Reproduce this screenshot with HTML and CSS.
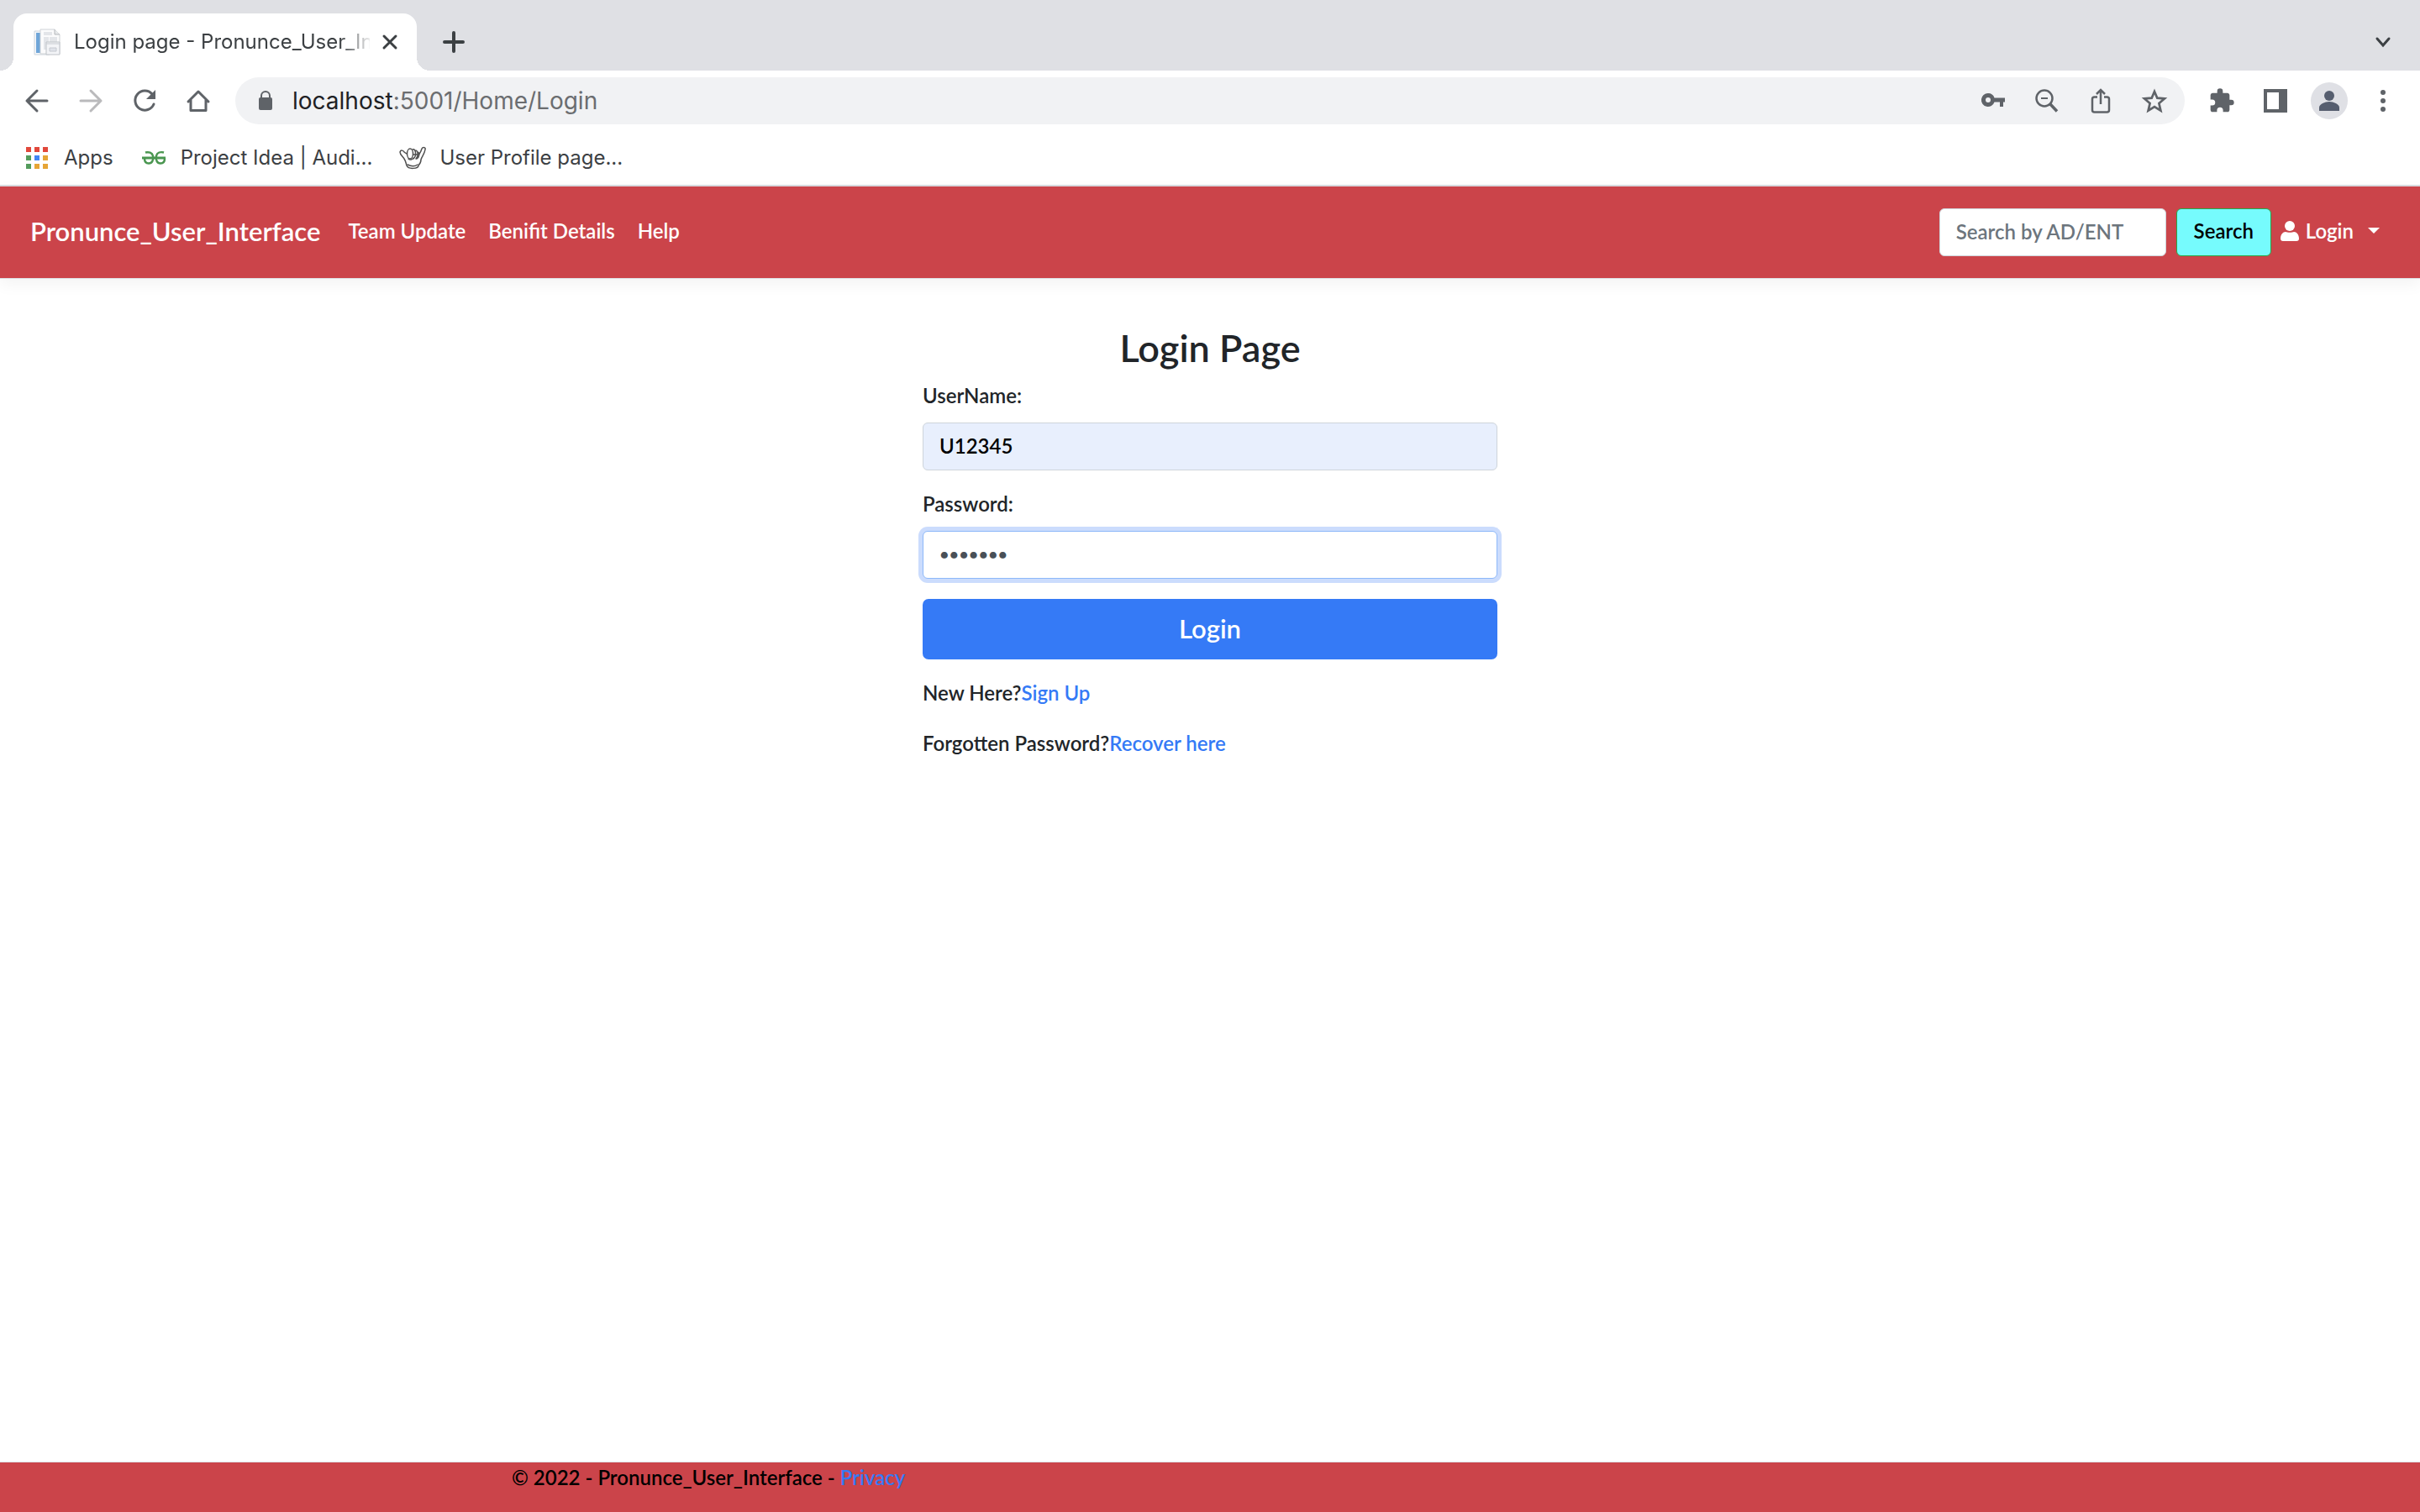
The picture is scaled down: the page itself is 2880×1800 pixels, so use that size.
FILE: index.html
```html
<!DOCTYPE html>
<html lang="en">
<head>
  <meta charset="utf-8">
  <title>Login page - Pronunce_User_Interface</title>
  <link rel="stylesheet" href="styles.css">
</head>
<body>
  <div class="browser">
    <div class="tab-strip">
      <div class="tab">
        <svg class="icon" viewBox="0 0 32 32">
          <path d="M1 3h18v28H1z" fill="#f4f7fa" stroke="#ccd4dc"/>
          <path d="M3 5h6v24H3z" fill="#6fa5d8"/>
          <path d="M8 1h17l6 6v23H8z" fill="#fbfbfc" stroke="#cfd2d6"/>
          <path d="M12 4h10v4H12zM12 10h6v15h-6zM19 10h9v8h-9z" fill="#e3e5e9"/>
          <path d="M25 1v6h6" fill="#e8eaec" stroke="#b4b7bb"/>
          <path d="M15 16h16v15H15z" fill="#f3f4f7" stroke="#bfc3c8"/>
          <path d="M15 18h16M19 23h8v4h-8z" fill="#e0e3ea" stroke="#c6cad0"/>
        </svg>
        <span class="tab-title">Login page - Pronunce_User_In</span>
        <button class="tool tab-close" aria-label="Close tab">
          <svg class="icon" viewBox="0 0 32 32"><path d="M9 9l14 14M23 9L9 23" fill="none" stroke="#3c4043" stroke-width="3" stroke-linecap="round"/></svg>
        </button>
      </div>
      <button class="tool new-tab" aria-label="New tab">
        <svg class="icon" viewBox="0 0 32 32"><path d="M16 5v22M5 16h22" fill="none" stroke="#3c4043" stroke-width="4" stroke-linecap="round"/></svg>
      </button>
      <button class="tool tab-search" aria-label="Search tabs">
        <svg class="icon" viewBox="0 0 32 32"><path d="M9 12l7 8 7-8" fill="none" stroke="#3c4043" stroke-width="3" stroke-linecap="round"/></svg>
      </button>
    </div>

    <div class="toolbar">
      <button class="tool" aria-label="Back">
        <svg class="icon" viewBox="0 0 32 32"><path d="M28 16H4M16 4L4 16l12 12" fill="none" stroke="#5f6368" stroke-width="3" stroke-linecap="round" stroke-linejoin="round"/></svg>
      </button>
      <button class="tool" aria-label="Forward">
        <svg class="icon" viewBox="0 0 32 32"><path d="M4 16h24M16 4l12 12-12 12" fill="none" stroke="#bababc" stroke-width="3" stroke-linecap="round" stroke-linejoin="round"/></svg>
      </button>
      <button class="tool" aria-label="Reload">
        <svg class="icon" viewBox="0 0 32 32"><path d="M25 8A11.500 11.500 0 1 0 27 20" fill="none" stroke="#5f6368" stroke-width="3" stroke-linecap="round"/><path d="M29 3v11H18z" fill="#5f6368"/></svg>
      </button>
      <button class="tool" aria-label="Home">
        <svg class="icon" viewBox="0 0 32 32"><path d="M4 17L16 5l12 12M7 15v12.500h18V15" fill="none" stroke="#5f6368" stroke-width="3" stroke-linecap="round" stroke-linejoin="round"/></svg>
      </button>
      <div class="omnibox">
        <svg class="icon" viewBox="0 0 32 32"><path d="M11 14v-4a5 5 0 0 1 10 0v4" fill="none" stroke="#5f6368" stroke-width="2"/><rect x="8" y="12" width="16" height="15" rx="2" fill="#5f6368"/></svg>
        <span class="url"><span class="host">localhost</span>:5001/Home/Login</span>
        <span class="omni-actions">
          <button class="tool" aria-label="Passwords">
            <svg class="icon" viewBox="0 0 32 32"><path fill-rule="evenodd" d="M10 7a8 8 0 1 0 7.500 10.500H24V23h4v-5.500h2v-5H17.500A8 8 0 0 0 10 7zm0 5a3 3 0 1 1 0 6 3 3 0 0 1 0-6z" fill="#5f6368"/></svg>
          </button>
          <button class="tool" aria-label="Zoom">
            <svg class="icon" viewBox="0 0 32 32"><g fill="none" stroke="#5f6368"><circle cx="13" cy="13" r="9.500" stroke-width="2.500"/><path d="M19.500 19.500l8.500 9" stroke-width="3.500"/><path d="M9 13h8" stroke-width="2"/></g></svg>
          </button>
          <button class="tool" aria-label="Share">
            <svg class="icon" viewBox="0 0 32 32"><path d="M12 11.500H8.500Q6 11.500 6 14v13Q6 29.500 8.500 29.500h15q2.500 0 2.500-2.500V14q0-2.500-2.500-2.500H20M16 20V3.500M11 8l5-5 5 5" fill="none" stroke="#5f6368" stroke-width="2.500"/></svg>
          </button>
          <button class="tool" aria-label="Bookmark this tab">
            <svg class="icon" viewBox="0 0 32 32"><path d="M16 5l3.300 7.700 8.700.7-6.600 5.700 2 8.600-7.400-4.600-7.400 4.600 2-8.600L4 13.400l8.700-.7z" fill="none" stroke="#5f6368" stroke-width="2.700"/></svg>
          </button>
        </span>
      </div>
      <button class="tool" aria-label="Extensions">
        <svg class="icon" viewBox="0 0 24 24"><path d="M20.500 11H19V7c0-1.100-.9-2-2-2h-4V3.500a2.500 2.500 0 0 0-5 0V5H4c-1.100 0-2 .9-2 2v3.800h1.500a2.700 2.700 0 0 1 0 5.400H2V20c0 1.100.9 2 2 2h3.800v-1.500a2.700 2.700 0 0 1 5.400 0V22H17c1.100 0 2-.9 2-2v-4h1.500a2.500 2.500 0 0 0 0-5z" fill="#5f6368"/></svg>
      </button>
      <button class="tool" aria-label="Side panel">
        <svg class="icon" viewBox="0 0 32 32"><path fill-rule="evenodd" d="M2 2h28v28H2zM6 6v20h14V6z" fill="#5f6368"/></svg>
      </button>
      <button class="tool avatar" aria-label="Profile">
        <svg class="icon" viewBox="0 0 32 32"><circle cx="16" cy="10" r="6" fill="#565e6f"/><path d="M4 28v-4c0-4 7-7 12-7s12 3 12 7v4z" fill="#565e6f"/></svg>
      </button>
      <button class="tool" aria-label="Menu">
        <svg class="icon" viewBox="0 0 32 32" fill="#5f6368"><circle cx="16" cy="6" r="3"/><circle cx="16" cy="16" r="3"/><circle cx="16" cy="26" r="3"/></svg>
      </button>
    </div>

    <div class="bookmarks">
      <a class="bookmark" href="#apps">
        <svg class="icon" viewBox="0 0 32 32"><path d="M3 3h6v6H3zM13 3h6v6h-6zM23 3h6v6h-6z" fill="#e1483b"/><path d="M3 13h6v6H3zM3 23h6v6H3z" fill="#549c5c"/><path d="M13 13h6v6h-6z" fill="#4285f4"/><path d="M23 13h6v6h-6zM13 23h6v6h-6zM23 23h6v6h-6z" fill="#e6a536"/></svg>
        Apps
      </a>
      <a class="bookmark" href="#project-idea">
        <svg class="icon" viewBox="0 0 32 32"><g fill="none" stroke="#4a9650"><path d="M2 16h28" stroke-width="3"/><path d="M6 9.500c4-1 8 0 9 4 1 5-1 9-5 9s-5-3-5-6M28 9.500c-4-1-8 0-9 4-1 5 1 9 5 9s5-3 5-6" stroke-width="2.500"/></g></svg>
        Project Idea | Audi...
      </a>
      <a class="bookmark" href="#user-profile">
        <svg class="icon" viewBox="0 0 32 32"><g fill="#fff" stroke="#505050" stroke-width="1.500" stroke-linecap="round" stroke-linejoin="round"><path d="M9 25c-1-3-1-5-3-8-2-3-5-5-5-8 1-3 4-2 5 0 1 1 3 2 5 3h12c2-1 3-4 4-7 1-2 5-2 4 1-1 6-4 8-5 12 0 3-1 5-3 7 0 4-12 5-14 0z"/><ellipse cx="13" cy="11" rx="3.500" ry="6"/><path d="M16 6c4-2 5 8 1 11M19 7c4 0 4 7 1 10M22 9c3 1 2 6-1 8M11 17c2 2 5 1 6-1M10 24c4 2 9 2 12 0" fill="none"/></g></svg>
        User Profile page...
      </a>
    </div>
  </div>

  <header class="navbar">
    <a class="brand" href="#home">Pronunce_User_Interface</a>
    <nav class="nav-links">
      <a href="#team">Team Update</a>
      <a href="#benefits">Benifit Details</a>
      <a href="#help">Help</a>
    </nav>
    <form class="search">
      <input class="field" type="text" placeholder="Search by AD/ENT" aria-label="Search by AD/ENT">
      <button class="search-button" type="button">Search</button>
    </form>
    <button class="account" type="button">
      <svg class="account-icon" viewBox="0 0 22 24" fill="#fff"><circle cx="11" cy="6" r="6"/><path d="M0 21c0-5 3-8 6-8 2 1 8 1 10 0 3 0 6 3 6 8 0 2-1 3-3 3H3c-2 0-3-1-3-3z"/></svg>
      Login
      <span class="caret"></span>
    </button>
  </header>

  <main class="content">
    <form class="login">
      <h1 class="title">Login Page</h1>
      <div class="group">
        <label for="username">UserName:</label>
        <input class="field filled" id="username" type="text" value="U12345">
      </div>
      <div class="group">
        <label for="password">Password:</label>
        <input class="field focused" id="password" type="password" value="1234567">
      </div>
      <button class="submit" type="button">Login</button>
      <p class="hint">New Here?<a href="#signup">Sign Up</a></p>
      <p class="hint">Forgotten Password?<a href="#recover">Recover here</a></p>
    </form>
  </main>

  <footer class="footer">
    <div class="footer-text">© 2022 - Pronunce_User_Interface - <a href="#privacy">Privacy</a></div>
  </footer>
</body>
</html>
```
FILE: styles.css
```css
* {
  box-sizing: border-box;
}

body {
  margin: 0;
  min-height: 100vh;
  display: flex;
  flex-direction: column;
  background: #fff;
  color: #212529;
  font: 600 24px/36px Lato, "Josefin Sans", sans-serif;
}

a {
  color: #357af6;
  text-decoration: none;
}

button,
input {
  font: inherit;
}

button {
  border: 0;
  padding: 0;
  background: none;
}

/* Browser frame */
.browser {
  border-bottom: 2px solid #dadce0;
  color: #3c4043;
  font: 400 24px/32px Inter, sans-serif;
}

.icon {
  display: block;
  flex: none;
  width: 32px;
  height: 32px;
}

.tool {
  flex: none;
  width: 32px;
  height: 32px;
}

.tab-strip {
  display: flex;
  height: 84px;
  padding: 16px 28px 0 0;
  background: #dfe0e4;
}

.tab {
  position: relative;
  display: flex;
  align-items: center;
  width: 480px;
  margin-left: 16px;
  padding: 0 16px 0 24px;
  border-radius: 16px 16px 0 0;
  background: #fff;
}

.tab::before,
.tab::after {
  content: "";
  position: absolute;
  bottom: 0;
  width: 16px;
  height: 16px;
}

.tab::before {
  right: 100%;
  background: radial-gradient(circle at 0 0, #dfe0e4 16px, #fff 16px);
}

.tab::after {
  left: 100%;
  background: radial-gradient(circle at 100% 0, #dfe0e4 16px, #fff 16px);
}

.tab-title {
  flex: 1;
  min-width: 0;
  margin-left: 16px;
  overflow: hidden;
  white-space: nowrap;
  -webkit-mask-image: linear-gradient(90deg, #000 316px, transparent 356px);
  mask-image: linear-gradient(90deg, #000 316px, transparent 356px);
}

.tab-close {
  margin-left: 8px;
}

.new-tab {
  align-self: center;
  margin-left: 28px;
}

.tab-search {
  align-self: center;
  margin-left: auto;
}

.toolbar {
  display: flex;
  align-items: center;
  gap: 32px;
  padding: 8px 28px 0;
}

.omnibox {
  display: flex;
  flex: 1;
  align-items: center;
  height: 56px;
  margin: 0 -4px;
  padding: 0 20px;
  border-radius: 28px;
  background: #f1f2f4;
  font-size: 28px;
}

.url {
  margin-left: 16px;
  color: #6b6d70;
}

.host {
  color: #202124;
}

.omni-actions {
  display: flex;
  gap: 32px;
  margin-left: auto;
}

.avatar {
  display: grid;
  place-items: center;
  width: 44px;
  height: 44px;
  margin: 0 -6px;
  border-radius: 50%;
  background: #dfe0e5;
}

.bookmarks {
  display: flex;
  align-items: center;
  gap: 32px;
  height: 72px;
  padding: 6px 28px 0;
}

.bookmark {
  display: flex;
  align-items: center;
  gap: 16px;
  padding-top: 2px;
  color: inherit;
}

/* Site header */
.navbar {
  display: flex;
  align-items: center;
  height: 110px;
  padding: 0 48px 0 36px;
  border-bottom: 1px solid #dee2e6;
  background: #cb444a;
  box-shadow: 0 6px 18px rgba(0, 0, 0, .05);
  color: #fff;
}

.navbar a {
  padding-bottom: 4px;
  color: inherit;
}

.brand {
  font-size: 31px;
}

.nav-links {
  display: flex;
  gap: 27px;
  margin-left: 33px;
}

.search {
  display: flex;
  gap: 12px;
  margin-left: auto;
}

.field {
  width: 100%;
  height: 57px;
  padding: 0 19px 3px;
  border: 1px solid #ced4da;
  border-radius: 6px;
  background: #fff;
  color: #495057;
  outline: 0;
}

.field::placeholder {
  color: #6c757d;
  opacity: 1;
}

.search .field {
  width: 270px;
}

.search-button {
  width: 113px;
  padding-bottom: 3px;
  border: 1px solid #28a745;
  border-radius: 6px;
  background: #76fbfd;
  color: #000;
}

.account {
  display: flex;
  align-items: center;
  gap: 8px;
  margin-left: 11px;
  padding-bottom: 4px;
  color: inherit;
}

.account-icon {
  width: 22px;
  height: 24px;
}

.caret {
  margin-left: 9px;
  border: 7px solid transparent;
  border-top-color: #fff;
  border-bottom: 0;
}

/* Login form */
.content {
  flex: 1;
  padding: 52px 24px;
}

.login {
  display: flex;
  flex-direction: column;
  max-width: 684px;
  margin: 0 auto;
}

.title {
  margin: 0;
  font-size: 45px;
  line-height: 60px;
  font-weight: 600;
  text-align: center;
}

.group {
  display: flex;
  flex-direction: column;
  gap: 14px;
  margin: 9px 0 13px;
}

.filled {
  background: #e8effd;
  color: #000;
}

.focused {
  border-color: #8db8f9;
  box-shadow: 0 0 0 5px #cbdcfd;
  font-size: 20px;
}

.submit {
  height: 72px;
  margin: 11px 0 22px;
  padding-bottom: 3px;
  border-radius: 7px;
  background: #357af6;
  color: #fff;
  font-size: 31px;
}

.hint {
  margin: 0 0 24px;
}

/* Site footer */
.footer {
  height: 60px;
  border-top: 1px solid #dee2e6;
  background: #cb444a;
  color: #000;
}

.footer-text {
  max-width: 1710px;
  margin: 0 auto;
  padding: 0 24px;
}
```
